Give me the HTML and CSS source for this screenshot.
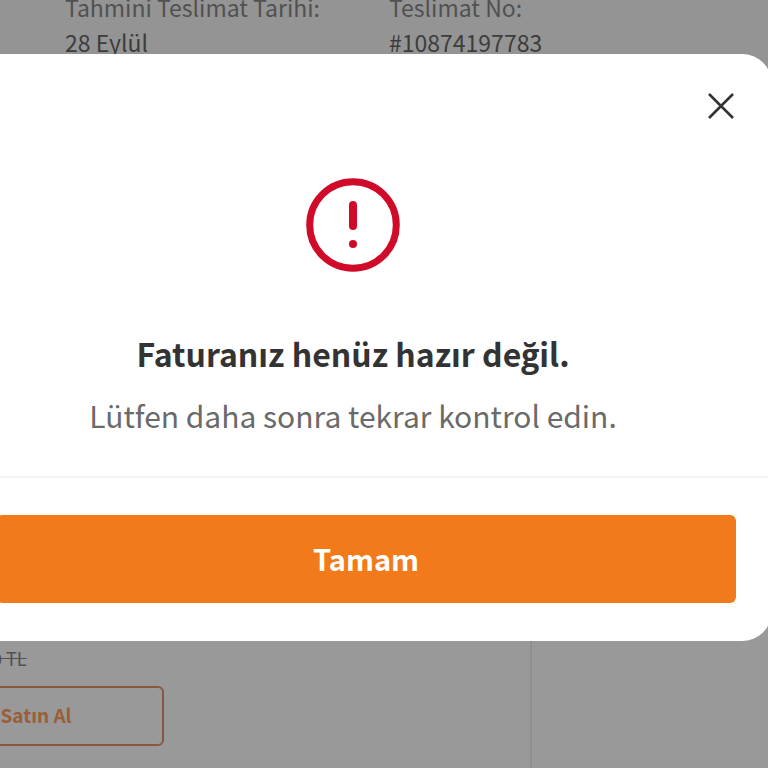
FILE: index.html
```
<!DOCTYPE html>
<html lang="tr">
<head>
    <meta charset="UTF-8">
    <meta name="viewport" content="width=device-width, initial-scale=1.0">
    <title>Sipariş Detayı</title>
    <link rel="stylesheet" href="styles.css">
</head>
<body>
    <main class="page">
        <dl class="delivery">
            <div class="delivery-item">
                <dt>Tahmini Teslimat Tarihi:</dt>
                <dd>28 Eylül</dd>
            </div>
            <div class="delivery-item">
                <dt>Teslimat No:</dt>
                <dd>#10874197783</dd>
            </div>
        </dl>
        <section class="products">
            <div class="product">
                <del class="old-price">0 TL</del>
                <button type="button" class="buy-button">Satın Al</button>
            </div>
        </section>
    </main>
    <div class="overlay" id="overlay">
        <div class="modal" role="dialog" aria-modal="true" aria-labelledby="modal-title">
            <div class="modal-header">
                <button type="button" class="close-button" id="close-button" aria-label="Kapat">
                    <svg width="28" height="28" viewBox="0 0 28 28" fill="none" stroke="#333" stroke-width="2.6">
                        <path d="M2 2L26 26M26 2L2 26"/>
                    </svg>
                </button>
            </div>
            <div class="modal-body">
                <svg class="alert-icon" width="94" height="94" viewBox="0 0 94 94" fill="none" stroke="#d00b29">
                    <circle cx="47" cy="47" r="43.3" stroke-width="7"/>
                    <path d="M47 27V48" stroke-width="8" stroke-linecap="round"/>
                    <circle cx="47" cy="66" r="4" fill="#d00b29" stroke="none"/>
                </svg>
                <h1 id="modal-title">Faturanız henüz hazır değil.</h1>
                <p class="subtitle">Lütfen daha sonra tekrar kontrol edin.</p>
            </div>
            <div class="modal-footer">
                <button type="button" class="button" id="ok-button">Tamam</button>
            </div>
        </div>
    </div>
    <script>
        function closeModal() {
            document.getElementById('overlay').classList.add('hidden');
        }
        document.getElementById('close-button').addEventListener('click', closeModal);
        document.getElementById('ok-button').addEventListener('click', closeModal);
    </script>
</body>
</html>
```
FILE: styles.css
```
:root {
    --orange: #f27a1a;
    --red: #d00b29;
    --text: #333;
    --text-light: #6a6a6a;
}

* {
    box-sizing: border-box;
}

body {
    margin: 0;
    font-family: 'Source Sans Pro', 'Noto Sans CJK TC', 'Open Sans', sans-serif;
    color: var(--text);
    background-color: #fff;
    overflow: hidden;
}

button {
    font-family: inherit;
    cursor: pointer;
}

.page {
    display: flex;
    flex-direction: column;
    height: 100vh;
}

.delivery {
    display: flex;
    flex: none;
    height: 340px;
    margin: -10px 0 0;
    padding: 0 65px;
    font-size: 23px;
    line-height: 35px;
    background-color: #f7f7f7;
}

.delivery-item {
    flex: none;
    width: 324px;
}

.delivery dt {
    color: #888;
}

.delivery dd {
    margin: 0;
    color: #666;
}

.products {
    display: flex;
    flex: 1;
}

.product {
    display: flex;
    flex-direction: column;
    justify-content: flex-end;
    align-items: flex-start;
    width: 532px;
    padding-bottom: 22px;
    border-right: 2px solid #eee;
}

.old-price {
    margin-left: -8px;
    font-size: 18px;
    line-height: 24px;
    color: #888;
}

.buy-button {
    width: 256px;
    height: 60px;
    margin: 16px 0 0 -92px;
    padding-bottom: 4px;
    font-size: 19px;
    font-weight: bold;
    color: #ff9f62;
    background-color: #fff;
    border: 2px solid #e09468;
    border-radius: 6px;
}

.overlay {
    position: fixed;
    inset: 0;
    padding-top: 54px;
    background-color: rgba(0, 0, 0, 0.4);
}

.overlay.hidden {
    display: none;
}

.modal {
    margin: 0 -4px 0 -66px;
    background-color: #fff;
    border-radius: 30px;
}

.modal-header {
    display: flex;
    justify-content: flex-end;
    padding: 38px 37px 0;
}

.close-button {
    display: flex;
    padding: 0;
    background: none;
    border: none;
}

.modal-body {
    display: flex;
    flex-direction: column;
    align-items: center;
    padding: 58px 40px 36px;
    text-align: center;
    border-bottom: 2px solid #f3f3f3;
}

h1 {
    margin: 56px 0 0;
    font-size: 32px;
    font-weight: bold;
    line-height: 50px;
}

.subtitle {
    margin: 12px 0 0;
    font-size: 30px;
    line-height: 50px;
    color: var(--text-light);
}

.modal-footer {
    padding: 37px 36px 38px 62px;
}

.button {
    display: block;
    width: 100%;
    height: 88px;
    padding-bottom: 4px;
    font-size: 29px;
    font-weight: bold;
    color: #fff;
    background-color: var(--orange);
    border: none;
    border-radius: 6px;
}
```
